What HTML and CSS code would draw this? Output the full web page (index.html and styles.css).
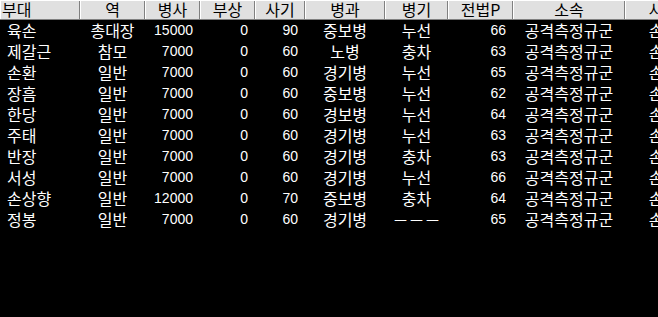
FILE: index.html
```html
<!DOCTYPE html>
<html lang="ko">
<head>
<meta charset="utf-8">
<title>부대 목록</title>
<link rel="stylesheet" href="styles.css">
</head>
<body>
<div class="list">
  <div class="row head">
    <div class="h left">부대</div>
    <div class="h">역</div>
    <div class="h">병사</div>
    <div class="h">부상</div>
    <div class="h">사기</div>
    <div class="h">병과</div>
    <div class="h">병기</div>
    <div class="h">전법P</div>
    <div class="h">소속</div>
    <div class="h">사</div>
  </div>
  <div class="row"><div class="c name">육손</div><div class="c ctr">총대장</div><div class="c num">15000</div><div class="c num">0</div><div class="c num">90</div><div class="c ctr">중보병</div><div class="c ctr">누선</div><div class="c num">66</div><div class="c ctr">공격측정규군</div><div class="c ctr">손</div></div>
  <div class="row"><div class="c name">제갈근</div><div class="c ctr">참모</div><div class="c num">7000</div><div class="c num">0</div><div class="c num">60</div><div class="c ctr">노병</div><div class="c ctr">충차</div><div class="c num">63</div><div class="c ctr">공격측정규군</div><div class="c ctr">손</div></div>
  <div class="row"><div class="c name">손환</div><div class="c ctr">일반</div><div class="c num">7000</div><div class="c num">0</div><div class="c num">60</div><div class="c ctr">경기병</div><div class="c ctr">누선</div><div class="c num">65</div><div class="c ctr">공격측정규군</div><div class="c ctr">손</div></div>
  <div class="row"><div class="c name">장흠</div><div class="c ctr">일반</div><div class="c num">7000</div><div class="c num">0</div><div class="c num">60</div><div class="c ctr">중보병</div><div class="c ctr">누선</div><div class="c num">62</div><div class="c ctr">공격측정규군</div><div class="c ctr">손</div></div>
  <div class="row"><div class="c name">한당</div><div class="c ctr">일반</div><div class="c num">7000</div><div class="c num">0</div><div class="c num">60</div><div class="c ctr">경보병</div><div class="c ctr">누선</div><div class="c num">64</div><div class="c ctr">공격측정규군</div><div class="c ctr">손</div></div>
  <div class="row"><div class="c name">주태</div><div class="c ctr">일반</div><div class="c num">7000</div><div class="c num">0</div><div class="c num">60</div><div class="c ctr">경기병</div><div class="c ctr">누선</div><div class="c num">63</div><div class="c ctr">공격측정규군</div><div class="c ctr">손</div></div>
  <div class="row"><div class="c name">반장</div><div class="c ctr">일반</div><div class="c num">7000</div><div class="c num">0</div><div class="c num">60</div><div class="c ctr">경기병</div><div class="c ctr">충차</div><div class="c num">63</div><div class="c ctr">공격측정규군</div><div class="c ctr">손</div></div>
  <div class="row"><div class="c name">서성</div><div class="c ctr">일반</div><div class="c num">7000</div><div class="c num">0</div><div class="c num">60</div><div class="c ctr">경기병</div><div class="c ctr">누선</div><div class="c num">66</div><div class="c ctr">공격측정규군</div><div class="c ctr">손</div></div>
  <div class="row"><div class="c name">손상향</div><div class="c ctr">일반</div><div class="c num">12000</div><div class="c num">0</div><div class="c num">70</div><div class="c ctr">중보병</div><div class="c ctr">충차</div><div class="c num">64</div><div class="c ctr">공격측정규군</div><div class="c ctr">손</div></div>
  <div class="row"><div class="c name">정봉</div><div class="c ctr">일반</div><div class="c num">7000</div><div class="c num">0</div><div class="c num">60</div><div class="c ctr">경기병</div><div class="c ctr">－－－</div><div class="c num">65</div><div class="c ctr">공격측정규군</div><div class="c ctr">손</div></div>
</div>
</body>
</html>
```
FILE: styles.css
```css
html, body {
  margin: 0;
  padding: 0;
  background: #000;
  width: 658px;
  height: 317px;
  overflow: hidden;
}

.list {
  width: 658px;
  overflow: hidden;
  font-family: "Noto Sans CJK KR", sans-serif;
  font-size: 16px;
}

.row {
  display: grid;
  grid-template-columns: 80px 65px 55px 55px 50px 80px 63px 65px 112px 62px;
  height: 21px;
  line-height: 21px;
  color: #fff;
  white-space: nowrap;
}

.row.head {
  height: 19px;
  line-height: 19px;
  color: #000;
  border-bottom: 1px solid #808080;
  background: #000;
}

.h {
  background: #e0e0e0;
  text-align: center;
  box-shadow: inset 1px 1px 0 #fff, inset -1px 0 0 #808080;
  overflow: hidden;
}

.h.left {
  text-align: left;
  padding-left: 2px;
}

.c {
  overflow: hidden;
}

.name {
  padding-left: 7px;
}

.ctr {
  text-align: center;
}

.num {
  text-align: right;
  padding-right: 7px;
  font-family: "Liberation Sans", sans-serif;
  font-size: 14px;
}
```
